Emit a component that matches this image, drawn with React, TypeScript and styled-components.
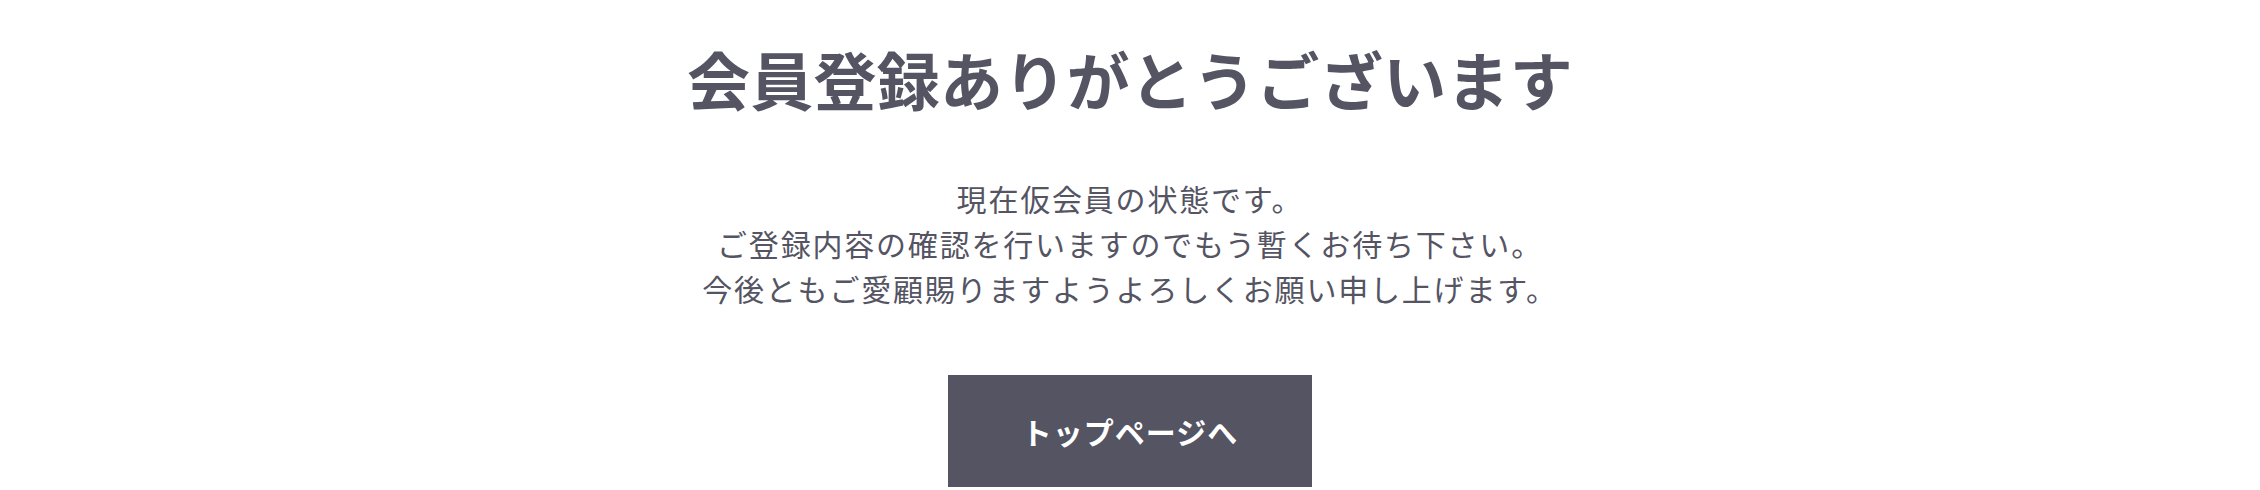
import React from "react";
import styled, { createGlobalStyle } from "styled-components";

//===============================
// @Global
//===============================
const GlobalStyle = createGlobalStyle`
  html, body {
    margin: 0;
    padding: 0;
    background: #fff;
  }
  body {
    font-family: "Noto Sans CJK JP", "Noto Sans", sans-serif;
    color: #545463;
  }
`;

const INK = "#545463";

//===============================
// @Styled
//===============================
const Page = styled.main`
  display: flex;
  flex-direction: column;
  align-items: center;
  padding-top: 27px;
  text-align: center;
`;

const Title = styled.h1`
  margin: 0;
  font-size: 63px;
  line-height: 102px;
  font-weight: 700;
  letter-spacing: 0.3px;
  color: ${INK};
`;

const Message = styled.p`
  margin: 47px 0 0;
  font-size: 30px;
  line-height: 45px;
  letter-spacing: 1.8px;
  font-weight: 400;
  color: ${INK};
`;

const TopButton = styled.a`
  display: flex;
  align-items: center;
  justify-content: center;
  margin-top: 64px;
  width: 364px;
  height: 112px;
  background: ${INK};
  color: #fff;
  font-size: 30px;
  font-weight: 700;
  letter-spacing: 1px;
  text-decoration: none;
  cursor: pointer;
`;

//===============================
// @Component
//===============================
const lines = [
  "現在仮会員の状態です。",
  "ご登録内容の確認を行いますのでもう暫くお待ち下さい。",
  "今後ともご愛顧賜りますようよろしくお願い申し上げます。",
];

const App: React.FC = () => (
  <>
    <GlobalStyle />
    <Page>
      <Title>会員登録ありがとうございます</Title>
      <Message>
        {lines.map((line, i) => (
          <React.Fragment key={i}>
            {line}
            {i < lines.length - 1 && <br />}
          </React.Fragment>
        ))}
      </Message>
      <TopButton href="#">トップページへ</TopButton>
    </Page>
  </>
);

export default App;
